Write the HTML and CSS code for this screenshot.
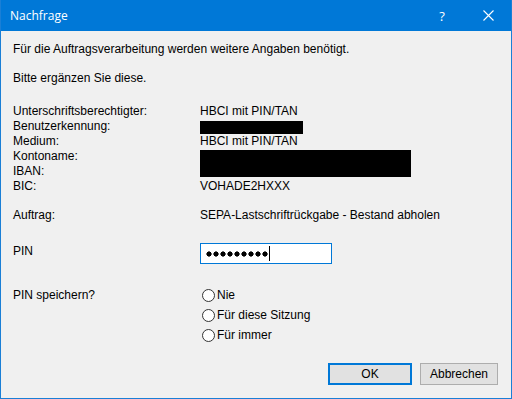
FILE: index.html
```html
<!DOCTYPE html>
<html lang="de">
<head>
  <meta charset="UTF-8">
  <title>Nachfrage</title>
  <link rel="stylesheet" href="styles.css">
</head>
<body>
  <div class="window">
    <div class="titlebar">
      <span class="title">Nachfrage</span>
      <span class="tb-btn">?</span>
      <span class="tb-btn close">
        <svg width="11" height="11" viewBox="0 0 11 11"><path d="M0.5 0.5 L10.5 10.5 M10.5 0.5 L0.5 10.5" stroke="#fff" stroke-width="1.1"/></svg>
      </span>
    </div>

    <div class="content">
      <p class="line">Für die Auftragsverarbeitung werden weitere Angaben benötigt.</p>
      <p class="line gap">Bitte ergänzen Sie diese.</p>

      <div class="info">
        <span>Unterschriftsberechtigter:</span><span>HBCI mit PIN/TAN</span>
        <span>Benutzerkennung:</span><span><i class="redact small"></i></span>
        <span>Medium:</span><span>HBCI mit PIN/TAN</span>
        <span>Kontoname:</span><span class="span2"><i class="redact big"></i></span>
        <span>IBAN:</span>
        <span>BIC:</span><span>VOHADE2HXXX</span>
      </div>

      <div class="row auftrag">
        <span class="label">Auftrag:</span>
        <span>SEPA-Lastschriftrückgabe - Bestand abholen</span>
      </div>

      <div class="row pin">
        <span class="label">PIN</span>
        <div class="input"><span class="dots" aria-label="PIN (9 Zeichen)"></span><span class="caret"></span></div>
      </div>

      <div class="row save">
        <span class="label">PIN speichern?</span>
        <div class="radios">
          <label class="radio"><span class="circle"></span>Nie</label>
          <label class="radio"><span class="circle"></span>Für diese Sitzung</label>
          <label class="radio"><span class="circle"></span>Für immer</label>
        </div>
      </div>

      <div class="buttons">
        <button class="btn default">OK</button>
        <button class="btn">Abbrechen</button>
      </div>
    </div>
  </div>
</body>
</html>
```

FILE: styles.css
```css
* { box-sizing:border-box; margin:0; padding:0; }
html, body { width:512px; height:399px; overflow:hidden; background:#f0f0f0; }
body { font-family:'Liberation Sans', Arial, sans-serif; font-size:12px; color:#000; }

.window {
  width:512px; height:399px;
  border:1px solid #1a7fd6; border-top:0;
  display:flex; flex-direction:column;
  background:#f0f0f0;
}
.titlebar {
  height:31px; background:#0078d7; color:#fff;
  display:flex; align-items:center;
  font-family:'Open Sans', 'Noto Sans', sans-serif; font-size:12px;
  padding-left:9px;
}
.title { flex:1; }
.tb-btn { width:46px; text-align:center; font-size:13px; }
.tb-btn.close { display:flex; justify-content:center; align-items:center; height:100%; }

.content { flex:1; padding:11px 12px 0; display:flex; flex-direction:column; }
.line { line-height:15px; }
.line.gap { margin-top:14px; }

.info {
  display:grid; grid-template-columns:187px auto;
  grid-auto-rows:15px; line-height:15px;
  margin-top:18px;
}
.info .span2 { grid-row:span 2; }
.redact { display:block; background:#000; }
.redact.small { width:103px; height:13px; margin-top:2px; }
.redact.big { width:211px; height:27px; margin-top:1px; }

.row { display:grid; grid-template-columns:187px auto; line-height:15px; }
.auftrag { margin-top:14px; }
.pin { margin-top:21px; align-items:start; }
.input {
  width:132px; height:21px; background:#fff;
  border:1px solid #0078d7;
  display:flex; align-items:center; padding-left:5px;
  margin-top:-1px;
}
.dots {
  width:63px; height:6px;
  background:radial-gradient(circle at 3px 3px, #000 2.3px, transparent 2.9px) 0 0 / 7px 6px repeat-x;
}
.caret { width:1px; height:15px; background:#000; margin-left:0; }

.save { margin-top:24px; }
.radios { display:flex; flex-direction:column; gap:5px; margin-left:2px; }
.radio { display:flex; align-items:center; line-height:15px; gap:2px; }
.circle {
  width:13px; height:13px; border:1px solid #333; border-radius:50%; background:#fff;
}

.buttons { display:flex; justify-content:flex-end; gap:8px; margin-top:20px; padding-right:1px; }
.btn {
  width:84px; height:22px; background:#e1e1e1;
  border:1px solid #adadad;
  font-family:'Liberation Sans', Arial, sans-serif; font-size:12px; color:#000;
}
.btn:last-child { width:78px; }
.btn.default { border:2px solid #0078d7; }
```
